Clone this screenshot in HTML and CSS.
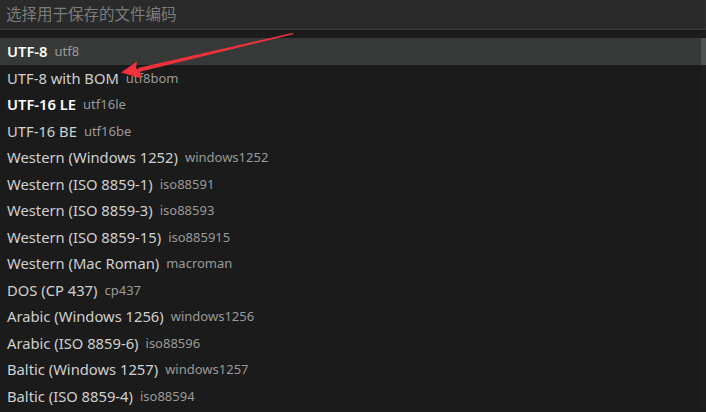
FILE: index.html
```html
<!DOCTYPE html>
<html>
<head>
<meta charset="utf-8">
<link rel="stylesheet" href="styles.css">
</head>
<body>
<div class="picker">
  <div class="input"><span class="placeholder">选择用于保存的文件编码</span></div>
  <div class="spacer"></div>
  <div class="listwrap">
    <ul class="list">
      <li class="row selected strong"><span class="label">UTF-8</span><span class="desc">utf8</span></li>
      <li class="row"><span class="label">UTF-8 with BOM</span><span class="desc">utf8bom</span></li>
      <li class="row strong"><span class="label">UTF-16 LE</span><span class="desc">utf16le</span></li>
      <li class="row"><span class="label">UTF-16 BE</span><span class="desc">utf16be</span></li>
      <li class="row"><span class="label">Western (Windows 1252)</span><span class="desc">windows1252</span></li>
      <li class="row"><span class="label">Western (ISO 8859-1)</span><span class="desc">iso88591</span></li>
      <li class="row"><span class="label">Western (ISO 8859-3)</span><span class="desc">iso88593</span></li>
      <li class="row"><span class="label">Western (ISO 8859-15)</span><span class="desc">iso885915</span></li>
      <li class="row"><span class="label">Western (Mac Roman)</span><span class="desc">macroman</span></li>
      <li class="row"><span class="label">DOS (CP 437)</span><span class="desc">cp437</span></li>
      <li class="row"><span class="label">Arabic (Windows 1256)</span><span class="desc">windows1256</span></li>
      <li class="row"><span class="label">Arabic (ISO 8859-6)</span><span class="desc">iso88596</span></li>
      <li class="row"><span class="label">Baltic (Windows 1257)</span><span class="desc">windows1257</span></li>
      <li class="row"><span class="label">Baltic (ISO 8859-4)</span><span class="desc">iso88594</span></li>
    </ul>
    <div class="scrollbar"><div class="thumb"></div></div>
  </div>
  <svg class="arrow" width="706" height="412" viewBox="0 0 706 412">
    <polygon points="292,33 294,34 139,72 138,68" fill="#f2323a"/>
    <polygon points="121,72.5 137,61.5 136,68 140,71 142,78.5" fill="#f2323a"/>
  </svg>
</div>
</body>
</html>
```

FILE: styles.css
```css
html, body {
  margin: 0;
  padding: 0;
  background: #1b1b1b;
}
.picker {
  position: relative;
  width: 706px;
  height: 412px;
  overflow: hidden;
  background: #1b1b1b;
}
.input {
  height: 30px;
  background: #2a2a2a;
  border-bottom: 1px solid #3b3b3b;
  border-right: 1px solid #353535;
  box-sizing: border-box;
  width: 706px;
  display: flex;
  align-items: center;
  padding-left: 6px;
}
.placeholder {
  font-family: "Noto Sans CJK SC", "Noto Sans", sans-serif;
  font-size: 15.5px;
  color: #7c7c7c;
  line-height: 1;
  position: relative;
  top: -1px;
}
.spacer {
  height: 8px;
  background: #1c1c1c;
}
.listwrap {
  display: flex;
}
.list {
  list-style: none;
  margin: 0;
  padding: 0;
  flex: 1;
}
.row {
  height: 26.5px;
  display: flex;
  align-items: center;
  padding-left: 7px;
  font-family: "Noto Sans", "Open Sans", sans-serif;
  white-space: nowrap;
}
.row.selected {
  background: #373938;
}
.label {
  font-size: 14.75px;
  color: #d0d0d0;
}
.row.strong .label {
  color: #ffffff;
  font-weight: 600;
}
.desc {
  font-size: 13px;
  color: #9a9a9a;
  margin-left: 7px;
}
.scrollbar {
  width: 5px;
  background: #1d1d1d;
}
.thumb {
  height: 27px;
  background: #4f5251;
}
.arrow {
  position: absolute;
  left: 0;
  top: 0;
  pointer-events: none;
}
```
